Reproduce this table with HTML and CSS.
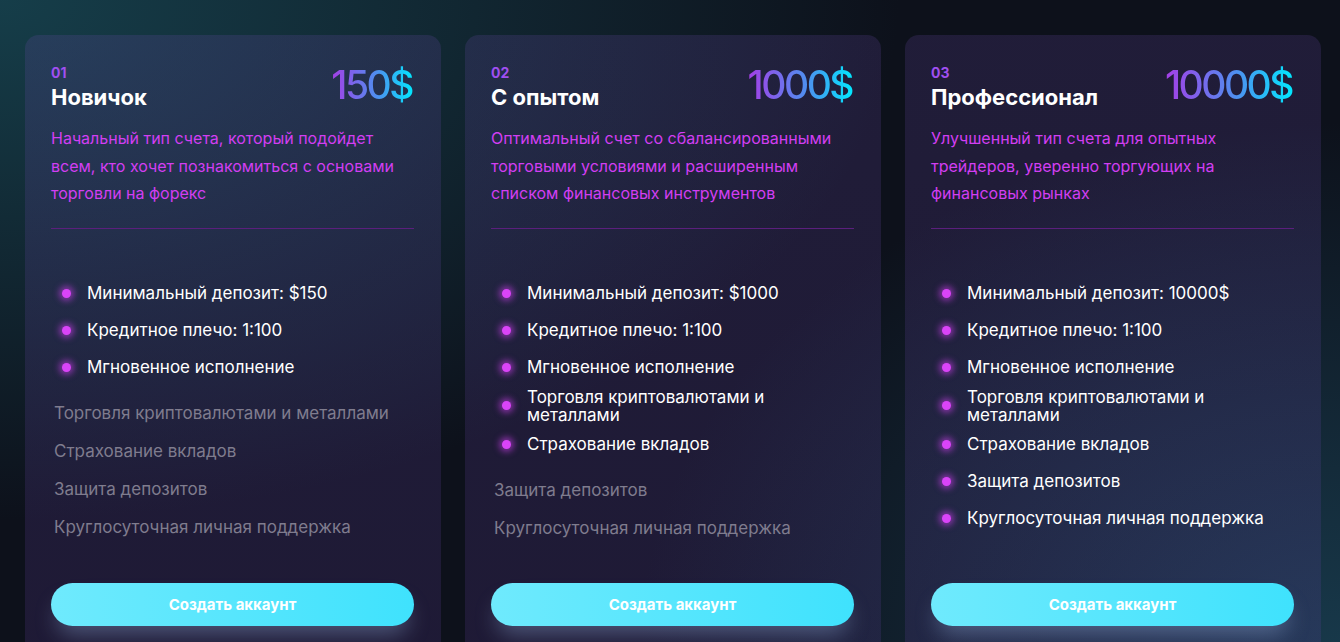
FILE: index.html
```html
<!DOCTYPE html>
<html lang="ru">
<head>
<meta charset="utf-8">
<title>Типы счетов</title>
<link rel="stylesheet" href="styles.css">
</head>
<body>
<main class="plans">
  <article class="card card-1">
    <header class="card-head">
      <div class="card-titles">
        <span class="card-num">01</span>
        <h2 class="card-title">Новичок</h2>
      </div>
      <div class="card-price">150$</div>
    </header>
    <p class="card-desc">Начальный тип счета, который подойдет всем, кто хочет познакомиться с основами торговли на форекс</p>
    <hr class="card-divider">
    <ul class="features">
      <li class="feature">Минимальный депозит: $150</li>
      <li class="feature">Кредитное плечо: 1:100</li>
      <li class="feature">Мгновенное исполнение</li>
    </ul>
    <ul class="features-off">
      <li class="feature-off">Торговля криптовалютами и металлами</li>
      <li class="feature-off">Страхование вкладов</li>
      <li class="feature-off">Защита депозитов</li>
      <li class="feature-off">Круглосуточная личная поддержка</li>
    </ul>
    <button class="cta">Создать аккаунт</button>
  </article>

  <article class="card card-2">
    <header class="card-head">
      <div class="card-titles">
        <span class="card-num">02</span>
        <h2 class="card-title">С опытом</h2>
      </div>
      <div class="card-price">1000$</div>
    </header>
    <p class="card-desc">Оптимальный счет со сбалансированными торговыми условиями и расширенным списком финансовых инструментов</p>
    <hr class="card-divider">
    <ul class="features">
      <li class="feature">Минимальный депозит: $1000</li>
      <li class="feature">Кредитное плечо: 1:100</li>
      <li class="feature">Мгновенное исполнение</li>
      <li class="feature">Торговля криптовалютами и металлами</li>
      <li class="feature">Страхование вкладов</li>
    </ul>
    <ul class="features-off">
      <li class="feature-off">Защита депозитов</li>
      <li class="feature-off">Круглосуточная личная поддержка</li>
    </ul>
    <button class="cta">Создать аккаунт</button>
  </article>

  <article class="card card-3">
    <header class="card-head">
      <div class="card-titles">
        <span class="card-num">03</span>
        <h2 class="card-title">Профессионал</h2>
      </div>
      <div class="card-price">10000$</div>
    </header>
    <p class="card-desc">Улучшенный тип счета для опытных трейдеров, уверенно торгующих на финансовых рынках</p>
    <hr class="card-divider">
    <ul class="features">
      <li class="feature">Минимальный депозит: 10000$</li>
      <li class="feature">Кредитное плечо: 1:100</li>
      <li class="feature">Мгновенное исполнение</li>
      <li class="feature">Торговля криптовалютами и металлами</li>
      <li class="feature">Страхование вкладов</li>
      <li class="feature">Защита депозитов</li>
      <li class="feature">Круглосуточная личная поддержка</li>
    </ul>
    <button class="cta">Создать аккаунт</button>
  </article>
</main>
</body>
</html>
```

FILE: styles.css
```css
* { box-sizing: border-box; }

html, body {
  margin: 0;
  padding: 0;
  height: 100%;
  overflow: hidden;
}

body {
  font-family: Inter, "Noto Sans", sans-serif;
  color: #fff;
  background-color: #0d111b;
  background-image:
    radial-gradient(ellipse 900px 520px at 0% 0%, rgba(22, 64, 76, 0.95), rgba(22, 64, 76, 0) 100%),
    radial-gradient(ellipse 700px 520px at 100% 100%, rgba(24, 58, 76, 0.95), rgba(24, 58, 76, 0) 100%);
}

.plans {
  display: grid;
  grid-template-columns: repeat(3, 416px);
  gap: 24px;
  padding: 35px 25px 0;
}

.card {
  display: flex;
  flex-direction: column;
  min-height: 620px;
  padding: 30px 27px 29px 26px;
  border-radius: 14px;
  background: linear-gradient(180deg, rgba(110, 75, 175, 0.2), rgba(100, 62, 160, 0.2));
}

.card-head {
  display: flex;
  justify-content: space-between;
  align-items: flex-start;
}

.card-titles {
  display: flex;
  flex-direction: column;
}

.card-num {
  font-size: 14px;
  line-height: 16px;
  font-weight: 700;
  color: #a04ff0;
}

.card-title {
  margin: 2px 0 0;
  font-size: 22px;
  line-height: 28px;
  font-weight: 700;
  color: #fff;
}

.card-price {
  font-size: 39px;
  line-height: 44px;
  font-weight: 500;
  letter-spacing: -2.5px;
  margin-top: -2px;
  padding-right: 2px;
  background: linear-gradient(90deg, #a53ee6 0%, #4f8ff0 55%, #00eaff 100%);
  -webkit-background-clip: text;
  background-clip: text;
  color: transparent;
}

.card-desc {
  margin: 14px 0 0;
  font-size: 16px;
  line-height: 27.5px;
  color: #d23ef2;
}

.card-divider {
  margin: 20px 0 0;
  border: 0;
  height: 1px;
  background: #5b1f7d;
}

.features, .features-off {
  list-style: none;
  margin: 0;
  padding: 0;
  display: flex;
  flex-direction: column;
}

.features {
  margin-top: 48px;
  gap: 4px;
}

.feature {
  display: flex;
  align-items: center;
  min-height: 33px;
  font-size: 17px;
  line-height: 18px;
  color: #fff;
}

.feature::before {
  content: "";
  flex: none;
  width: 9px;
  height: 9px;
  margin: 0 16px 0 11px;
  border-radius: 50%;
  background: #da44f8;
  box-shadow: 0 0 6px 3px rgba(214, 63, 246, 0.55);
}

.features-off {
  margin-top: 12px;
  gap: 4px;
}

.feature-off {
  display: flex;
  align-items: center;
  min-height: 34px;
  padding-left: 3px;
  font-size: 17px;
  line-height: 18px;
  color: #7f7c8e;
}

.cta {
  margin-top: auto;
  height: 43px;
  width: 100%;
  border: 0;
  border-radius: 22px;
  font-family: inherit;
  font-size: 15px;
  font-weight: 700;
  color: #fff;
  background: linear-gradient(90deg, #6feafd 0%, #3fe2fd 100%);
  box-shadow: 0 14px 22px -6px rgba(150, 180, 225, 0.4);
  cursor: pointer;
}
```
